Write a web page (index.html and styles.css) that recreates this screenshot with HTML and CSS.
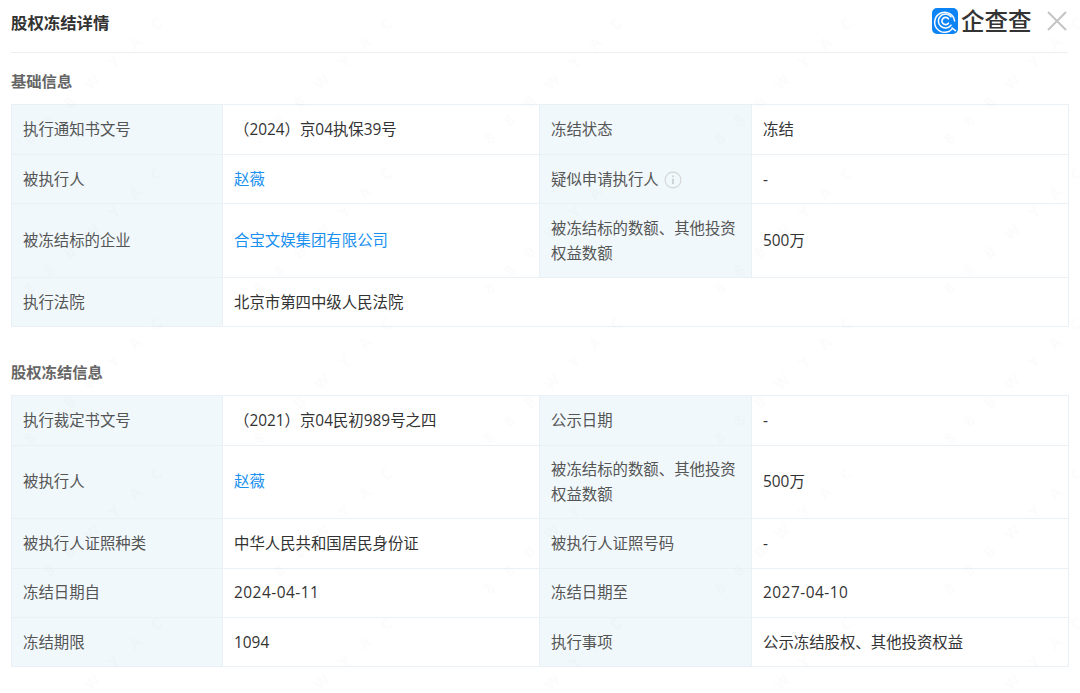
FILE: index.html
```html
<!DOCTYPE html>
<html lang="zh-CN">
<head>
<meta charset="utf-8">
<title>股权冻结详情</title>
<link rel="stylesheet" href="styles.css">
</head>
<body>
<div class="page">
  <header class="head">
    <h1 class="title">股权冻结详情</h1>
    <div class="brand">
      <svg class="logo" width="26" height="26" viewBox="0 0 26 26" aria-hidden="true">
        <rect width="26" height="26" rx="5" fill="#0d84f5"/>
        <path d="M20.6 20.4A10 10 0 1 1 22.6 13" fill="none" stroke="#fff" stroke-width="1.5" stroke-linecap="round"/>
        <path d="M19 17.2A7 7 0 1 1 19 8.8" fill="none" stroke="#fff" stroke-width="1.5" stroke-linecap="round"/>
        <path d="M16.4 15.2A3.6 3.6 0 1 1 16.4 10.8" fill="none" stroke="#fff" stroke-width="1.6" stroke-linecap="round"/>
        <path d="M20 20l3.4 2.6" fill="none" stroke="#fff" stroke-width="1.5" stroke-linecap="round"/>
      </svg>
      <span class="brand-name">企查查</span>
      <svg class="close" width="22" height="22" viewBox="0 0 22 22" aria-hidden="true">
        <path d="M2 2l18 18M20 2L2 20" stroke="#c4c4c4" stroke-width="2" fill="none"/>
      </svg>
    </div>
  </header>

  <h2 class="section">基础信息</h2>
  <table class="grid grid-first">
    <colgroup><col class="c1"><col class="c2"><col class="c3"><col class="c4"></colgroup>
    <tr class="r50"><th>执行通知书文号</th><td>（2024）京04执保39号</td><th>冻结状态</th><td>冻结</td></tr>
    <tr class="r49"><th>被执行人</th><td><a class="link">赵薇</a></td><th>疑似申请执行人<svg class="info" width="18" height="18" viewBox="0 0 18 18" aria-hidden="true"><circle cx="9" cy="9" r="7.9" fill="none" stroke="#d4d4d4" stroke-width="1.1"/><path d="M9 7.8v5.2M9 4.6v1.5" stroke="#bcbcbc" stroke-width="1.2" fill="none"/></svg></th><td class="muted">-</td></tr>
    <tr class="r74"><th>被冻结标的企业</th><td><a class="link">合宝文娱集团有限公司</a></td><th>被冻结标的数额、其他投资权益数额</th><td>500万</td></tr>
    <tr class="r49"><th>执行法院</th><td colspan="3">北京市第四中级人民法院</td></tr>
  </table>

  <h2 class="section second">股权冻结信息</h2>
  <table class="grid">
    <colgroup><col class="c1"><col class="c2"><col class="c3"><col class="c4"></colgroup>
    <tr class="r50"><th>执行裁定书文号</th><td>（2021）京04民初989号之四</td><th>公示日期</th><td class="muted">-</td></tr>
    <tr class="r73"><th>被执行人</th><td><a class="link">赵薇</a></td><th>被冻结标的数额、其他投资权益数额</th><td>500万</td></tr>
    <tr class="r50"><th>被执行人证照种类</th><td>中华人民共和国居民身份证</td><th>被执行人证照号码</th><td class="muted">-</td></tr>
    <tr class="r49"><th>冻结日期自</th><td class="date">2024-04-11</td><th>冻结日期至</th><td class="date">2027-04-10</td></tr>
    <tr class="r49 last"><th>冻结期限</th><td>1094</td><th>执行事项</th><td>公示冻结股权、其他投资权益</td></tr>
  </table>
</div>
<div class="watermark" aria-hidden="true"></div>
</body>
</html>
```
FILE: styles.css
```css
* { box-sizing: border-box; }
html, body { margin: 0; padding: 0; background: #fff; }
body {
  position: relative;
  width: 1080px;
  height: 693px;
  overflow: hidden;
  font-family: "Open Sans", "Noto Sans CJK SC", sans-serif;
  color: #333;
}
.page { padding: 0 12px 0 11px; }
.head {
  height: 53px;
  border-bottom: 1px solid #eceef0;
  display: flex;
  align-items: flex-start;
  justify-content: space-between;
}
.title {
  margin: 0;
  padding-top: 11px;
  font-size: 16.4px;
  line-height: 24px;
  font-weight: 700;
  color: #333;
}
.brand {
  display: flex;
  align-items: center;
  height: 26px;
  margin-top: 8px;
}
.logo { display: block; margin-right: 3px; }
.brand-name {
  font-size: 23.5px;
  line-height: 26px;
  font-weight: 500;
  color: #333;
  width: 71px;
  white-space: nowrap;
}
.close { display: block; margin-left: 14px; }
.section {
  margin: 0;
  padding-top: 16px;
  height: 51px;
  font-size: 15.3px;
  line-height: 24px;
  font-weight: 700;
  color: #666;
}
.section.second { padding-top: 33px; height: 68px; }
.grid {
  width: 1057px;
  table-layout: fixed;
  border-collapse: collapse;
  font-size: 15.4px;
  line-height: 25px;
}
.c1 { width: 211px; }
.c2 { width: 317px; }
.c3 { width: 212px; }
.c4 { width: 317px; }
.grid th, .grid td {
  border: 1px solid #e9f1f7;
  padding: 0 11px 1px;
  text-align: left;
  vertical-align: middle;
  font-weight: 400;
}
.grid-first th, .grid-first td, .grid .last th, .grid .last td { padding-bottom: 0; }
.grid th { background: #f0f8fc; color: #555; }
.grid td { color: #333; }
.r50 { height: 50px; }
.r49 { height: 49px; }
.r74 { height: 74px; }
.r73 { height: 73px; }
.link { color: #1a90f0; text-decoration: none; }
.muted { color: #666; }
.date { letter-spacing: .5px; }
.info { vertical-align: -4px; margin-left: 5px; }

.watermark {
  position: absolute;
  inset: 0;
  pointer-events: none;
  background-image: url("data:image/svg+xml,%3Csvg xmlns='http://www.w3.org/2000/svg' width='230' height='150'%3E%3Ctext transform='translate(30 145) rotate(-42)' font-family='Open Sans' font-size='15' font-weight='700' letter-spacing='18' fill='rgba(0,0,0,.012)'%3E88BWYAC%3C/text%3E%3C/svg%3E");
  background-repeat: repeat;
}
```
